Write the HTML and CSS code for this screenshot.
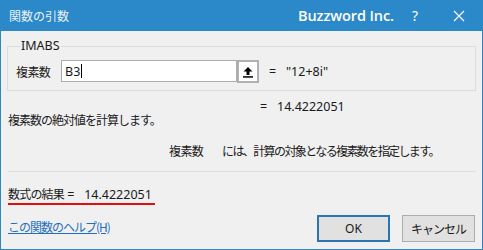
FILE: index.html
```html
<!DOCTYPE html>
<html lang="ja">
<head>
<meta charset="utf-8">
<link rel="stylesheet" href="styles.css">
</head>
<body>
<div class="window">
  <div class="titlebar">
    <span class="title">関数の引数</span>
    <span class="brand">Buzzword Inc.</span>
    <span class="help">?</span>
    <span class="close">
      <svg width="12" height="12" viewBox="0 0 12 12"><path d="M1 1L11 11M11 1L1 11" stroke="#fff" stroke-width="1.2" fill="none"/></svg>
    </span>
  </div>
  <div class="content">
    <fieldset class="group">
      <legend class="legend">IMABS</legend>
      <div class="argrow">
        <span class="arglabel">複素数</span>
        <div class="input"><span class="inputtext">B3</span><span class="caret"></span></div>
        <div class="refbtn">
          <svg width="12" height="12" viewBox="0 0 12 12"><path d="M6 1L10.5 5.5H7.5V9H4.5V5.5H1.5Z" fill="#000"/><rect x="1" y="10.2" width="10" height="1.5" fill="#000"/></svg>
        </div>
        <span class="eq">=</span>
        <span class="val">"12+8i"</span>
      </div>
    </fieldset>
    <div class="resultrow">
      <span class="eq">=</span>
      <span class="val">14.4222051</span>
    </div>
    <div class="desc">複素数の絶対値を計算します。</div>
    <div class="argdesc"><span class="argname">複素数</span><span class="argtext">には、計算の対象となる複素数を指定します。</span></div>
    <div class="sep"></div>
    <div class="formula"><span class="formulatext"><span class="cjk">数式の結果</span> =&nbsp;&nbsp;&nbsp;14.4222051</span></div>
    <div class="footer">
      <a class="helplink" href="#">この関数のヘルプ(H)</a>
      <div class="buttons">
        <button class="btn ok">OK</button>
        <button class="btn cancel">キャンセル</button>
      </div>
    </div>
  </div>
</div>
</body>
</html>
```

FILE: styles.css
```css
* { box-sizing: border-box; }
html, body { margin: 0; padding: 0; }
body {
  width: 483px;
  height: 250px;
  overflow: hidden;
  font-family: "Noto Sans CJK JP", "Noto Sans", sans-serif;
  font-size: 12px;
  color: #1a1a1a;
}
.window {
  width: 483px;
  height: 250px;
  background: #f0f0f0;
  border: 1px solid #2b87c8;
  border-top: none;
  display: flex;
  flex-direction: column;
}
.titlebar {
  height: 31px;
  background: #2b88c9;
  color: #fff;
  display: flex;
  align-items: center;
  padding-left: 9px;
  margin: 0 -1px;
}
.title {
  font-size: 12px;
  flex: 1;
  color: #eaf3fa;
}
.brand {
  font-family: "Open Sans", "Noto Sans", sans-serif;
  font-weight: 600;
  font-size: 14.5px;
  letter-spacing: -0.1px;
}
.help {
  font-family: "Noto Sans", sans-serif;
  font-size: 14px;
  margin-left: 18px;
}
.close {
  margin-left: 35px;
  margin-right: 18px;
  display: flex;
}
.content {
  flex: 1;
  padding: 8px 7px 0 6px;
  display: flex;
  flex-direction: column;
}
.group {
  margin: 0;
  border: 1px solid #dcdcdc;
  padding: 7px 0 4px 8px;
  height: 52px;
  width: 469px;
}
.legend {
  padding: 0 1px;
  margin-left: 4px;
  font-family: "Noto Sans", sans-serif;
  font-size: 12.5px;
  line-height: 14px;
}
.argrow {
  display: flex;
  align-items: center;
  height: 22px;
}
.arglabel {
  width: 45px;
  letter-spacing: -0.6px;
}
.input {
  width: 176px;
  height: 22px;
  background: #fff;
  border: 1px solid #adadad;
  display: flex;
  align-items: center;
  padding-left: 3px;
}
.inputtext {
  font-family: "Noto Sans", sans-serif;
  font-size: 12.5px;
}
.caret {
  width: 1px;
  height: 14px;
  background: #000;
  margin-left: 1px;
}
.refbtn {
  width: 22px;
  height: 23px;
  border: 2px solid #b0b0b0;
  background: #fff;
  display: flex;
  align-items: center;
  justify-content: center;
  margin-top: 1px;
}
.eq {
  font-family: "Noto Sans", sans-serif;
  margin-left: 10px;
  width: 17px;
  font-size: 12.5px;
}
.val {
  font-family: "Noto Sans", sans-serif;
  font-size: 12.5px;
}
.resultrow {
  display: flex;
  align-items: center;
  height: 16px;
  margin-top: 7px;
  padding-left: 253px;
}
.resultrow .eq { margin-left: 0; }
.desc {
  margin-top: -3px;
  height: 17px;
  line-height: 17px;
  padding-left: 1px;
  letter-spacing: -1px;
}
.argdesc {
  margin-top: 14px;
  height: 17px;
  line-height: 17px;
  padding-left: 162px;
  display: flex;
}
.argname {
  width: 53px;
  letter-spacing: -0.6px;
}
.argtext {
  letter-spacing: -1.6px;
}
.sep {
  margin-top: 12px;
  height: 1px;
  background: #dcdcdc;
  width: 468px;
  margin-left: 1px;
}
.formula {
  margin-top: 13px;
  height: 20px;
  padding-left: 1px;
}
.formulatext {
  display: inline-block;
  line-height: 17px;
  border-bottom: 2px solid #e01010;
  padding-right: 3px;
  font-family: "Noto Sans", sans-serif;
  font-size: 12.5px;
}
.cjk {
  font-family: "Noto Sans CJK JP", sans-serif;
  font-size: 12px;
  letter-spacing: -0.8px;
}
.footer {
  display: flex;
  align-items: center;
  justify-content: space-between;
  margin-top: 10px;
  padding-left: 1px;
}
.helplink {
  color: #1e6fbf;
  text-decoration: underline;
  margin-top: -4px;
  letter-spacing: -1px;
}
.buttons {
  display: flex;
  gap: 12px;
}
.btn {
  width: 73px;
  height: 27px;
  background: #e1e1e1;
  border: 1px solid #adadad;
  font-family: "Noto Sans CJK JP", "Noto Sans", sans-serif;
  font-size: 12px;
  color: #1a1a1a;
  padding: 0;
}
.btn.ok {
  border: 2px solid #2a75b5;
  font-family: "Noto Sans", sans-serif;
}
.btn.cancel {
  letter-spacing: -1px;
}
```
